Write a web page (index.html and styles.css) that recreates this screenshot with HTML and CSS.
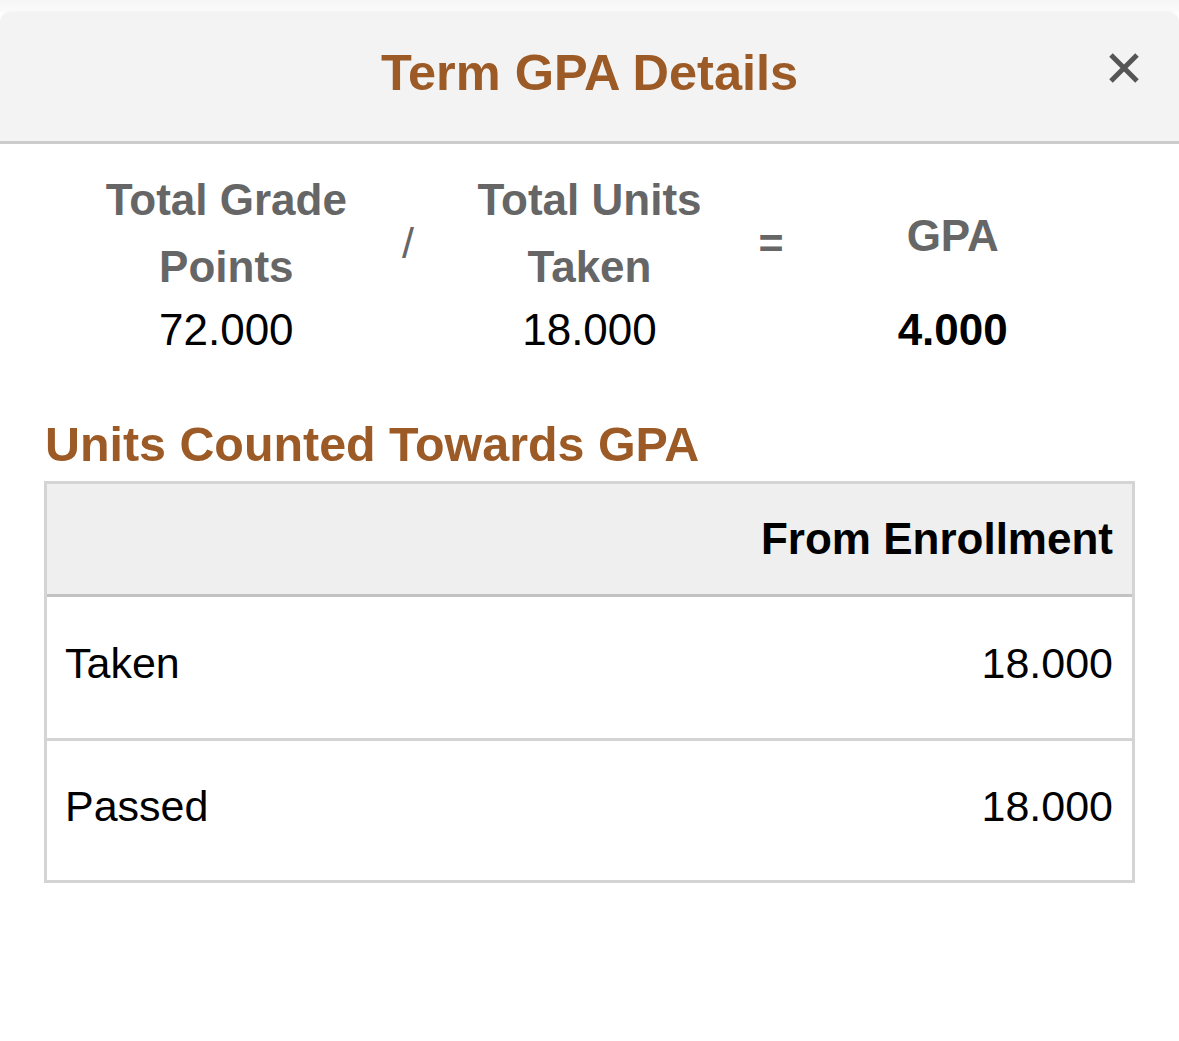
FILE: index.html
```html
<!DOCTYPE html>
<html lang="en">
<head>
<meta charset="utf-8">
<title>Term GPA Details</title>
<link rel="stylesheet" href="styles.css">
</head>
<body>
<div class="dialog">
  <header class="dialog-head">
    <h1 class="dialog-title">Term GPA Details</h1>
    <button class="close" aria-label="Close">
      <svg viewBox="0 0 32 32" width="32" height="32" aria-hidden="true">
        <path d="M3 3 L29 29 M29 3 L3 29" stroke="#555" stroke-width="5" fill="none"/>
      </svg>
    </button>
  </header>

  <section class="calc">
    <div class="label">Total Grade<br>Points</div>
    <div class="op op-div">/</div>
    <div class="label">Total Units<br>Taken</div>
    <div class="op op-eq">=</div>
    <div class="label label-gpa">GPA</div>
    <div class="value">72.000</div>
    <div></div>
    <div class="value">18.000</div>
    <div></div>
    <div class="value value-gpa">4.000</div>
  </section>

  <h2 class="section-title">Units Counted Towards GPA</h2>

  <div class="units">
    <div class="units-head">From Enrollment</div>
    <div class="units-row"><span>Taken</span><span>18.000</span></div>
    <div class="units-row units-row-sep"><span>Passed</span><span>18.000</span></div>
  </div>
</div>
</body>
</html>
```

FILE: styles.css
```css
html, body {
  margin: 0;
  padding: 0;
}
body {
  background: linear-gradient(#f6f6f6, #fbfbfb 12px, #ffffff 12px);
  font-family: "Liberation Sans", Arial, sans-serif;
  color: #000;
  height: 1041px;
}
.dialog {
  padding-top: 12px;
}
.dialog-head {
  position: relative;
  height: 129px;
  background: #f3f3f3;
  border-radius: 10px 10px 0 0;
  border-bottom: 3px solid #cccccc;
  display: flex;
  align-items: center;
  justify-content: center;
  box-shadow: 0 -1px 2px rgba(0,0,0,0.03);
}
.dialog-title {
  margin: 0;
  font-size: 50.5px;
  font-weight: bold;
  color: #9c5a26;
  line-height: 56px;
  padding-bottom: 7px;
}
.close {
  position: absolute;
  right: 39px;
  top: 40px;
  width: 32px;
  height: 32px;
  padding: 0;
  border: 0;
  background: transparent;
  display: flex;
}
.calc {
  width: 908px;
  margin: 0 auto;
  padding-top: 22px;
  display: grid;
  grid-template-columns: repeat(5, minmax(0, 1fr));
  justify-items: center;
}
.label {
  font-size: 44px;
  line-height: 67px;
  font-weight: bold;
  color: #666666;
  text-align: center;
  white-space: nowrap;
}
.label-gpa {
  align-self: center;
  padding-top: 4px;
}
.op {
  font-size: 43px;
  line-height: 67px;
  color: #666666;
  align-self: center;
  padding-top: 20px;
}
.op-div {
  font-weight: normal;
}
.op-eq {
  font-weight: bold;
}
.value {
  font-size: 44px;
  line-height: 60px;
  white-space: nowrap;
}
.value-gpa {
  font-weight: bold;
}
.section-title {
  margin: 57px 0 0 45px;
  font-size: 48.4px;
  line-height: 54px;
  font-weight: bold;
  color: #9c5a26;
}
.units {
  margin: 10px 44px 0 44px;
  border: 3px solid #d4d4d4;
}
.units-head {
  height: 110px;
  background: #efefef;
  border-bottom: 3px solid #c2c2c2;
  display: flex;
  align-items: center;
  justify-content: flex-end;
  padding-right: 19px;
  font-size: 44px;
  font-weight: bold;
}
.units-row {
  height: 141px;
  box-sizing: border-box;
  padding: 0 19px 8px 18px;
  display: flex;
  align-items: center;
  justify-content: space-between;
  font-size: 43px;
}
.units-row-sep {
  height: 142px;
  border-top: 3px solid #d4d4d4;
}
```
